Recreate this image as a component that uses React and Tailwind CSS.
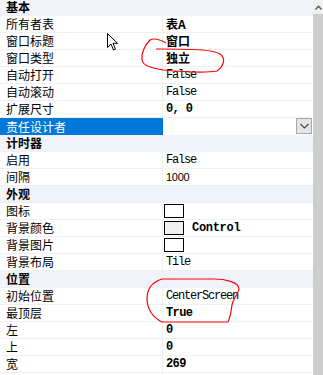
import React from 'react'

const cjk = "font-['Noto_Sans_CJK_SC',sans-serif]"
const mono = "font-['Liberation_Mono',monospace]"

const rows = [
  { h: '基本' },
  { n: '所有者表', v: '表A', t: 'cjkb' },
  { n: '窗口标题', v: '窗口', t: 'cjkb' },
  { n: '窗口类型', v: '独立', t: 'cjkb' },
  { n: '自动打开', v: 'False', t: 'mono' },
  { n: '自动滚动', v: 'False', t: 'mono' },
  { n: '扩展尺寸', v: '0, 0', t: 'monob' },
  { n: '责任设计者', sel: true },
  { h: '计时器' },
  { n: '启用', v: 'False', t: 'mono' },
  { n: '间隔', v: '1000', t: 'sans' },
  { h: '外观' },
  { n: '图标', swatch: 'bg-white' },
  { n: '背景颜色', swatch: 'bg-[#f0f0f0]', v: 'Control' },
  { n: '背景图片', swatch: 'bg-white' },
  { n: '背景布局', v: 'Tile', t: 'mono' },
  { h: '位置' },
  { n: '初始位置', v: 'CenterScreen', t: 'mono' },
  { n: '最顶层', v: 'True', t: 'monob' },
  { n: '左', v: '0', t: 'monob' },
  { n: '上', v: '0', t: 'monob' },
  { n: '宽', v: '269', t: 'monob' },
  { n: '高', v: '' },
]

const valueClass = {
  cjkb: `${cjk} text-[12px] font-bold`,
  mono: `${mono} text-[12px] tracking-[-1.2px]`,
  monob: `${mono} text-[12px] font-bold tracking-[-0.6px]`,
  sans: "font-['Liberation_Sans',sans-serif] text-[11px] tracking-[-0.3px]",
}

const Row = ({ row }) => {
  if (row.h) {
    return (
      <div className="h-[17px] shrink-0 flex items-center bg-[#f0f4fa] border-b border-[#f0f0f0] pl-[6px]">
        <span className={`${cjk} text-[12px] font-bold leading-none text-black`}>{row.h}</span>
      </div>
    )
  }

  if (row.sel) {
    return (
      <div className="h-[17px] shrink-0 flex">
        <div className="w-[163px] shrink-0 bg-[#0078d7] flex items-center pl-[6px]">
          <span className={`${cjk} text-[12px] leading-none text-white`}>{row.n}</span>
        </div>
        <div className="flex-1 flex items-start justify-end pr-[1px]">
          <div className="w-[16px] h-[16px] bg-[#e5e5e5] border border-[#a8a8a8] flex items-center justify-center">
            <svg width="9" height="6" viewBox="0 0 9 6">
              <path d="M0.5 1 L4.5 5 L8.5 1" fill="none" stroke="#444" strokeWidth="1.1" />
            </svg>
          </div>
        </div>
      </div>
    )
  }

  return (
    <div className="h-[17px] shrink-0 flex border-b border-[#f0f0f0]">
      <div className="w-[163px] shrink-0 border-r border-[#f0f0f0] flex items-center pl-[6px]">
        <span className={`${cjk} text-[12px] leading-none text-black`}>{row.n}</span>
      </div>
      {row.swatch ? (
        <div className="flex-1 flex items-center pl-[1px] gap-[8px]">
          <div className={`w-[20px] h-[14px] border border-black ${row.swatch}`} />
          {row.v && (
            <span className={`${mono} text-[12px] font-bold tracking-[-0.3px] leading-none`}>{row.v}</span>
          )}
        </div>
      ) : (
        <div className="flex-1 flex items-center pl-[3px]">
          <span className={`${valueClass[row.t] || ''} leading-none text-black whitespace-pre`}>{row.v}</span>
        </div>
      )}
    </div>
  )
}

const App = () => {
  return (
    <div className="relative w-[323px] h-[375px] overflow-hidden bg-white flex">
      {/* Property list */}
      <div className="flex-1 flex flex-col -mt-px">
        {rows.map((row, i) => (
          <Row key={i} row={row} />
        ))}
      </div>

      {/* Scrollbar */}
      <div className="w-[10px] shrink-0 flex flex-col bg-[#cdcdcd]">
        <div className="h-[14px] bg-[#f0f0f0] flex items-center justify-center">
          <svg width="7" height="5" viewBox="0 0 7 5">
            <path d="M0.5 4.5 L3.5 1.2 L6.5 4.5" fill="none" stroke="#555" strokeWidth="1.4" />
          </svg>
        </div>
      </div>

      {/* Red hand-drawn marks */}
      <svg className="absolute inset-0 pointer-events-none" width="323" height="375" viewBox="0 0 323 375">
        <path
          d="M166 43 C160 39 153 38 150 40 C145 45 141 53 142 60 C143 66 152 68 163 70 C185 72 205 73 217 71 C224 66 226 58 220 54 C213 50 200 49 161 49 L156 49"
          fill="none"
          stroke="#ff0000"
          strokeWidth="1.2"
        />
        <path
          d="M214 279 C225 279 239 282 239 289 C238 295 233 298 232 305 C231 312 230 318 228 322 L162 322 C154 318 148 312 147 300 C147 290 150 283 162 279 L214 279"
          fill="none"
          stroke="#ff0000"
          strokeWidth="1.2"
        />
      </svg>

      {/* Mouse cursor */}
      <svg className="absolute left-[107px] top-[33px] pointer-events-none" width="12" height="19" viewBox="0 0 12 19">
        <path
          d="M0.5 0.5 L0.5 14.5 L4 11 L6.5 17 L8.5 16.2 L6 10.3 L10.5 10.3 Z"
          fill="#ffffff"
          stroke="#000000"
          strokeWidth="1"
        />
      </svg>
    </div>
  )
}

export default App
